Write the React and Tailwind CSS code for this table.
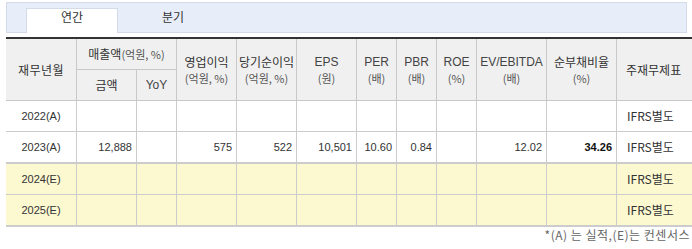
import React from "react";

const hdr =
  "bg-[#f0f0f0] border-r border-b border-[#c8c8c8] flex flex-col items-center justify-center text-[12px] leading-[16px] text-[#333]";
const sub = "text-[11px] text-[#555] font-['Noto_Sans_CJK_KR',sans-serif]";
const lat = "font-['Liberation_Sans',Arial,sans-serif] text-[#444]";

function Head2({ top, bottom, latin }) {
  return (
    <div className={`${hdr} row-span-2`}>
      <span className={latin ? lat : ""}>{top}</span>
      <span className={sub}>{bottom}</span>
    </div>
  );
}

const rows = [
  { y: "2022(A)", v: ["", "", "", "", "", "", "", "", "", ""], est: false },
  {
    y: "2023(A)",
    v: ["12,888", "", "575", "522", "10,501", "10.60", "0.84", "", "12.02", "34.26"],
    est: false,
    thick: true,
  },
  { y: "2024(E)", v: ["", "", "", "", "", "", "", "", "", ""], est: true },
  { y: "2025(E)", v: ["", "", "", "", "", "", "", "", "", ""], est: true, thick: true },
];

export default function App() {
  return (
    <div className="w-[692px] h-[249px] overflow-hidden bg-white font-['Noto_Sans_CJK_KR',sans-serif] text-[#333]">
      <div className="pt-[2px] pl-[6px]">
        <div className="w-[681px] h-[31px] border border-[#d3dae8] bg-[#e8eef9] flex items-end pl-[19px]">
          <div className="w-[92px] h-[25px] -mb-px bg-white border border-b-0 border-[#d3dae8] flex justify-center text-[12px] leading-[16px] text-[#333]">
            연간
          </div>
          <div className="w-[110px] h-[25px] -mb-px flex justify-center pt-px text-[12px] leading-[16px] text-[#333]">
            분기
          </div>
        </div>

        <div className="mt-[4px] w-[691px] grid grid-cols-[71px_60px_40px_60px_60px_60px_40px_40px_40px_70px_70px_80px] grid-rows-[31px_31px_31px_32px_31px_32px] border-t-2 border-[#333]">
          <div className={`${hdr} row-span-2 tracking-[0.5px]`}>재무년월</div>
          <div className={`${hdr} col-span-2 flex-row items-baseline`}>
            <span>매출액</span>
            <span className={sub}>(억원, %)</span>
          </div>
          <Head2 top="영업이익" bottom="(억원, %)" />
          <Head2 top="당기순이익" bottom="(억원, %)" />
          <Head2 top="EPS" bottom="(원)" latin />
          <Head2 top="PER" bottom="(배)" latin />
          <Head2 top="PBR" bottom="(배)" latin />
          <Head2 top="ROE" bottom="(%)" latin />
          <Head2 top="EV/EBITDA" bottom="(배)" latin />
          <Head2 top="순부채비율" bottom="(%)" />
          <div className={`${hdr} row-span-2 items-start pl-[9px]`}>주재무제표</div>
          <div className={hdr}>금액</div>
          <div className={`${hdr} ${lat}`}>YoY</div>

          {rows.map((r) => {
            const bg = r.est ? "bg-[#fcf8d0]" : "bg-white";
            const bb = r.thick ? "border-b-2 border-b-[#cccccc]" : "border-b border-b-[#cccccc]";
            return (
              <React.Fragment key={r.y}>
                <div
                  className={`${bg} ${bb} border-r border-r-[#cccccc] flex items-center justify-center text-[11px] font-['Liberation_Sans',Arial,sans-serif] text-[#333]`}
                >
                  {r.y}
                </div>
                {r.v.map((val, i) => (
                  <div
                    key={i}
                    className={`${bg} ${bb} border-r border-r-[#cccccc] flex items-center justify-end pr-[4px] text-[11px] font-['Liberation_Sans',Arial,sans-serif] ${
                      i === 9 ? "font-bold text-[#111]" : "text-[#333]"
                    }`}
                  >
                    {val}
                  </div>
                ))}
                <div className={`${bg} ${bb} flex items-center pl-[10px] text-[12px] text-[#333]`}>
                  IFRS별도
                </div>
              </React.Fragment>
            );
          })}
        </div>

        <div className="w-[684px] text-right text-[12px] leading-[16px] tracking-[0.5px] text-[#666] whitespace-nowrap">
          *(A) 는 실적,(E)는 컨센서스
        </div>
      </div>
    </div>
  );
}
